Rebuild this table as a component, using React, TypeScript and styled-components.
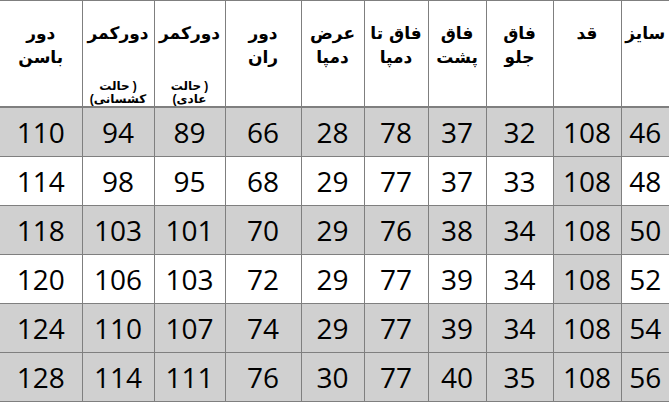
import React from "react";
import styled, { createGlobalStyle } from "styled-components";

const GlobalStyle = createGlobalStyle`
  html, body { margin: 0; padding: 0; background: #ffffff; }
  body { width: 669px; height: 403px; overflow: hidden; }
`;

const LINE = "#7f7f7f";
const GRAY = "#d0d0d0";

const Table = styled.table`
  direction: rtl;
  border-collapse: collapse;
  table-layout: fixed;
  width: 669px;
  border-top: 1px solid ${LINE};
`;

const HeadCell = styled.th<{ $w: number }>`
  width: ${(p) => p.$w}px;
  height: 106px;
  padding: 20px 0 0 0;
  box-sizing: border-box;
  vertical-align: top;
  text-align: center;
  border-left: 1px solid ${LINE};
  border-right: 1px solid ${LINE};
  border-bottom: 2px solid ${LINE};
  font-family: "DejaVu Sans", sans-serif;
  font-weight: bold;
  color: #000;
  &:first-child { border-right: none; }
  &:last-child { border-left: none; }
`;

const Main = styled.div`
  font-size: 17px;
  line-height: 24px;
  white-space: nowrap;
`;

const Note = styled.div`
  margin-top: 35px;
  font-size: 12px;
  line-height: 13px;
  white-space: nowrap;
  display: flex;
  flex-direction: column;
`;

const NoteLine = styled.div<{ $gap: number }>`
  display: flex;
  direction: ltr;
  justify-content: center;
  align-items: baseline;
  gap: ${(p) => p.$gap}px;
  height: 13px;
  line-height: 13px;
`;

const Paren = styled.span`
  direction: ltr;
  unicode-bidi: isolate;
  font-family: "Liberation Sans", sans-serif;
`;

const Word = styled.span`
  direction: rtl;
  unicode-bidi: isolate;
`;

const Cell = styled.td<{ $gray: boolean }>`
  height: 48px;
  padding: 0;
  text-align: center;
  vertical-align: middle;
  background: ${(p) => (p.$gray ? GRAY : "#ffffff")};
  border: 1px solid ${LINE};
  font-family: "Open Sans", "Liberation Sans", sans-serif;
  font-size: 28px;
  color: #000;
  &:first-child { border-right: none; }
  &:last-child { border-left: none; }
`;

type Col = { w: number; lines: string[]; note?: string };

const cols: Col[] = [
  { w: 48, lines: ["سایز"] },
  { w: 68, lines: ["قد"] },
  { w: 67, lines: ["فاق", "جلو"] },
  { w: 58, lines: ["فاق", "پشت"] },
  { w: 64, lines: ["فاق تا", "دمپا"] },
  { w: 63, lines: ["عرض", "دمپا"] },
  { w: 76, lines: ["دور", "ران"] },
  { w: 71, lines: ["دورکمر"], note: "عادی" },
  { w: 72, lines: ["دورکمر"], note: "کشسانی" },
  { w: 82, lines: ["دور", "باسن"] },
];

const rows: number[][] = [
  [46, 108, 32, 37, 78, 28, 66, 89, 94, 110],
  [48, 108, 33, 37, 77, 29, 68, 95, 98, 114],
  [50, 108, 34, 38, 76, 29, 70, 101, 103, 118],
  [52, 108, 34, 39, 77, 29, 72, 103, 106, 120],
  [54, 108, 34, 39, 77, 29, 74, 107, 110, 124],
  [56, 108, 35, 40, 77, 30, 76, 111, 114, 128],
];

const grayRows = [true, false, true, false, true, true];

function StateNote({ kind }: { kind: string }) {
  return (
    <Note>
      <NoteLine $gap={3}>
        <Word>حالت</Word>
        <Paren>)</Paren>
      </NoteLine>
      <NoteLine $gap={0}>
        <Paren>(</Paren>
        <Word>{kind}</Word>
      </NoteLine>
    </Note>
  );
}

export default function App() {
  return (
    <>
      <GlobalStyle />
      <Table dir="rtl">
        <thead>
          <tr>
            {cols.map((c, i) => (
              <HeadCell key={i} $w={c.w}>
                <Main>
                  {c.lines.map((l, j) => (
                    <div key={j}>{l}</div>
                  ))}
                </Main>
                {c.note && <StateNote kind={c.note} />}
              </HeadCell>
            ))}
          </tr>
        </thead>
        <tbody>
          {rows.map((r, ri) => (
            <tr key={ri}>
              {r.map((v, ci) => (
                <Cell key={ci} $gray={grayRows[ri] || ci === 1}>
                  {v}
                </Cell>
              ))}
            </tr>
          ))}
        </tbody>
      </Table>
    </>
  );
}
